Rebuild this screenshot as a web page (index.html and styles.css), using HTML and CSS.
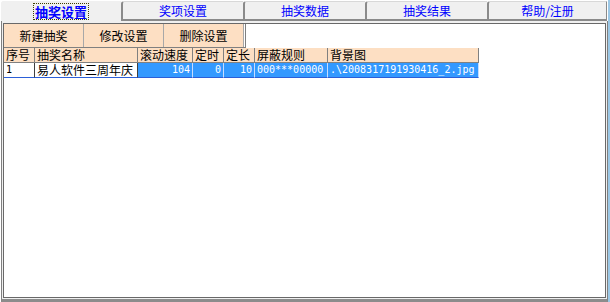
FILE: index.html
```html
<!DOCTYPE html>
<html lang="zh-CN">
<head>
    <meta charset="UTF-8">
    <title>抽奖设置</title>
    <link rel="stylesheet" href="styles.css">
</head>
<body>
    <div class="window">
        <div class="tabs">
            <div class="tab active"><span class="focus">抽奖设置</span></div>
            <div class="tab">奖项设置</div>
            <div class="tab">抽奖数据</div>
            <div class="tab">抽奖结果</div>
            <div class="tab">帮助/注册</div>
        </div>
        <div class="panel">
            <div class="frame">
                <div class="toolbar">
                    <div class="btn">新建抽奖</div>
                    <div class="btn">修改设置</div>
                    <div class="btn">删除设置</div>
                </div>
                <table class="grid">
                    <colgroup>
                        <col style="width:31px">
                        <col style="width:103px">
                        <col style="width:55px">
                        <col style="width:31px">
                        <col style="width:31px">
                        <col style="width:73px">
                        <col style="width:151px">
                    </colgroup>
                    <tr class="head">
                        <th>序号</th>
                        <th>抽奖名称</th>
                        <th>滚动速度</th>
                        <th>定时</th>
                        <th>定长</th>
                        <th>屏蔽规则</th>
                        <th>背景图</th>
                    </tr>
                    <tr class="row">
                        <td class="mono">1</td>
                        <td>易人软件三周年庆</td>
                        <td class="sel mono num">104</td>
                        <td class="sel mono num">0</td>
                        <td class="sel mono num">10</td>
                        <td class="sel mono">000***00000</td>
                        <td class="sel mono">.\2008317191930416_2.jpg</td>
                    </tr>
                </table>
            </div>
        </div>
    </div>
</body>
</html>
```

FILE: styles.css
```css
body{
     margin: 0;
     background-color: #ffffff;
     font-family: "Noto Sans CJK SC", "Liberation Sans", sans-serif;
     font-size: 12px;
}
.window{
     width: 608px;
     height: 302px;
     border-right: 2px solid #9cc8e6;
     display: flex;
     flex-direction: column;
}
.tabs{
     display: flex;
     align-items: flex-end;
     height: 21px;
}
.tab{
     box-sizing: border-box;
     width: 122px;
     height: 20px;
     background-color: #f0f0f0;
     border-top: 1px solid #d8d8d8;
     border-left: 2px solid #8a8a8a;
     border-bottom: 2px solid #8a8a8a;
     border-top-left-radius: 3px;
     color: #0000ff;
     display: flex;
     align-items: center;
     justify-content: center;
     line-height: 14px;
}
.tab:last-child{
     width: 120px;
     border-right: 1px solid #8a8a8a;
}
.tab.active{
     width: 121px;
     height: 21px;
     border-left: 1px solid #ffffff;
     border-top: 1px solid #ffffff;
     border-bottom: none;
     font-weight: bold;
     font-size: 13px;
}
.focus{
     outline: 1px dotted #404000;
     outline-offset: 0;
     padding: 0 1px;
     line-height: 15px;
}
.panel{
     flex: 1;
     background-color: #f0f0f0;
     margin-left: 1px;
     border-left: 1px solid #808080;
     border-right: 1px solid #808080;
     border-bottom: 3px solid #8c8c8c;
     padding: 2px 1px 1px 1px;
     display: flex;
}
.frame{
     flex: 1;
     background-color: #ffffff;
     border: 1px solid #696969;
}
.toolbar{
     display: flex;
     width: 241px;
     border-right: 1px solid #808080;
     border-bottom: 1px solid #808080;
}
.btn{
     width: 79px;
     height: 23px;
     background-color: #fddfc3;
     border-right: 1px solid #a8a8a8;
     display: flex;
     align-items: center;
     justify-content: center;
     color: #000000;
}
.grid{
     border-collapse: separate;
     border-spacing: 0;
     table-layout: fixed;
     width: 475px;
}
.grid th,
.grid td{
     box-sizing: border-box;
     height: 15px;
     padding: 0 2px;
     line-height: 14px;
     font-weight: normal;
     text-align: left;
     white-space: nowrap;
}
.head th{
     background-color: #fddfc3;
     border-right: 1px solid #808080;
     border-bottom: 1px solid #808080;
     color: #000000;
}
.row td{
     border-right: 1px solid #404040;
     border-bottom: 1px solid #2b5fd8;
}
.row td.sel{
     background-color: #3399ff;
     color: #ffffff;
     border-right: 1px solid #c8dcff;
}
.mono{
     font-family: "DejaVu Sans Mono", "Liberation Mono", monospace;
     font-size: 10px;
}
.num{
     text-align: right !important;
}
```
